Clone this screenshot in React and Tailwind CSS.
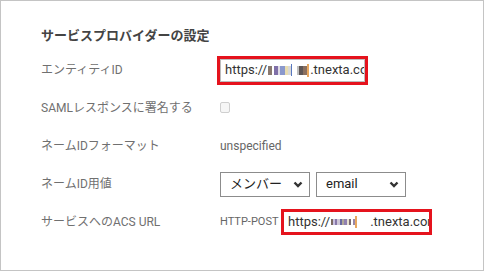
import React from "react";

const font = { fontFamily: "Roboto, 'Noto Sans CJK JP', sans-serif" };

const Redacted = ({ bars }) => (
  <span className="inline-flex items-center h-[14px] mx-[1px]">
    {bars.map(([w, h, c], i) => (
      <span key={i} className="inline-block" style={{ width: w, height: h, background: c }} />
    ))}
  </span>
);

const entityBars = [
  [4, 9, "#8a7a70"],
  [2, 9, "#fff"],
  [4, 9, "#8070a8"],
  [2, 9, "#e0dce6"],
  [5, 9, "#8a98cc"],
  [3, 9, "#e8dcb0"],
  [3, 9, "#d8d8d8"],
  [1, 12, "#5878c0"],
  [5, 9, "#fff"],
  [2, 9, "#c0c0c0"],
  [4, 9, "#5e5656"],
  [4, 9, "#8a7060"],
  [2, 13, "#e8a860"],
];

const acsBars = [
  [2, 6, "#7a6a60"],
  [2, 6, "#c8c0e0"],
  [2, 6, "#8878a8"],
  [3, 6, "#d0c8d8"],
  [2, 6, "#6868a0"],
  [2, 6, "#b0a898"],
  [3, 6, "#9080b0"],
  [2, 6, "#e8e0d0"],
  [2, 6, "#7a6a70"],
  [2, 6, "#fff"],
  [2, 6, "#9888a8"],
  [2, 12, "#e8a860"],
  [12, 6, "#fff"],
];

const Row = ({ label, children }) => (
  <div className="flex items-center h-[38px]">
    <div className="w-[179px] shrink-0 text-[12px] text-[#707070]">{label}</div>
    <div className="flex items-center">{children}</div>
  </div>
);

const Chevron = () => (
  <svg width="10" height="7" viewBox="0 0 10 7">
    <polyline points="1.5,1.5 5,5 8.5,1.5" fill="none" stroke="#333" strokeWidth="2.4" />
  </svg>
);

const Select = ({ value, w }) => (
  <div className={`flex items-center justify-between h-[25px] border border-[#8c8c8c] bg-white pl-[9px] pr-[6px] ${w}`}>
    <span className="text-[13px] text-[#222]">{value}</span>
    <Chevron />
  </div>
);

export default function App() {
  return (
    <div className="w-[487px] h-[272px] bg-white" style={font}>
      <div className="w-[484px] h-[271px] border border-[#c4c4c4] pl-[40px] pt-[26px]">
        <div className="h-[18px] flex items-center text-[13px] font-bold text-[#444]">
          サービスプロバイダーの設定
        </div>
        <div className="mt-[6px]">
          <Row label="エンティティID">
            <div className="-ml-[3px] border-[3px] border-[#e5131d] w-[151px] h-[29px]">
              <div className="h-full border border-[#bdbdbd] flex items-center pl-[4px] overflow-hidden whitespace-nowrap text-[13px] text-[#333]">
                https://
                <Redacted bars={entityBars} />
                .tnexta.com
              </div>
            </div>
          </Row>
          <Row label="SAMLレスポンスに署名する">
            <div className="w-[10px] h-[11px] border border-[#cfcfcf] bg-[#f6f6f6] rounded-[2px] mt-[-1px]" />
          </Row>
          <Row label="ネームIDフォーマット">
            <span className="text-[12px] text-[#666]">unspecified</span>
          </Row>
          <Row label="ネームID用値">
            <div className="flex gap-[6px]">
              <Select value="メンバー" w="w-[90px]" />
              <Select value="email" w="w-[90px]" />
            </div>
          </Row>
          <Row label="サービスへのACS URL">
            <span className="text-[11px] text-[#666] w-[61px] shrink-0 whitespace-nowrap">HTTP-POST</span>
            <div className="shrink-0 border-[3px] border-[#e5131d] w-[151px] h-[26px]">
              <div className="h-full flex items-center pl-[4px] overflow-hidden whitespace-nowrap text-[13px] text-[#333]">
                https://
                <Redacted bars={acsBars} />
                .tnexta.com
              </div>
            </div>
          </Row>
        </div>
      </div>
    </div>
  );
}
